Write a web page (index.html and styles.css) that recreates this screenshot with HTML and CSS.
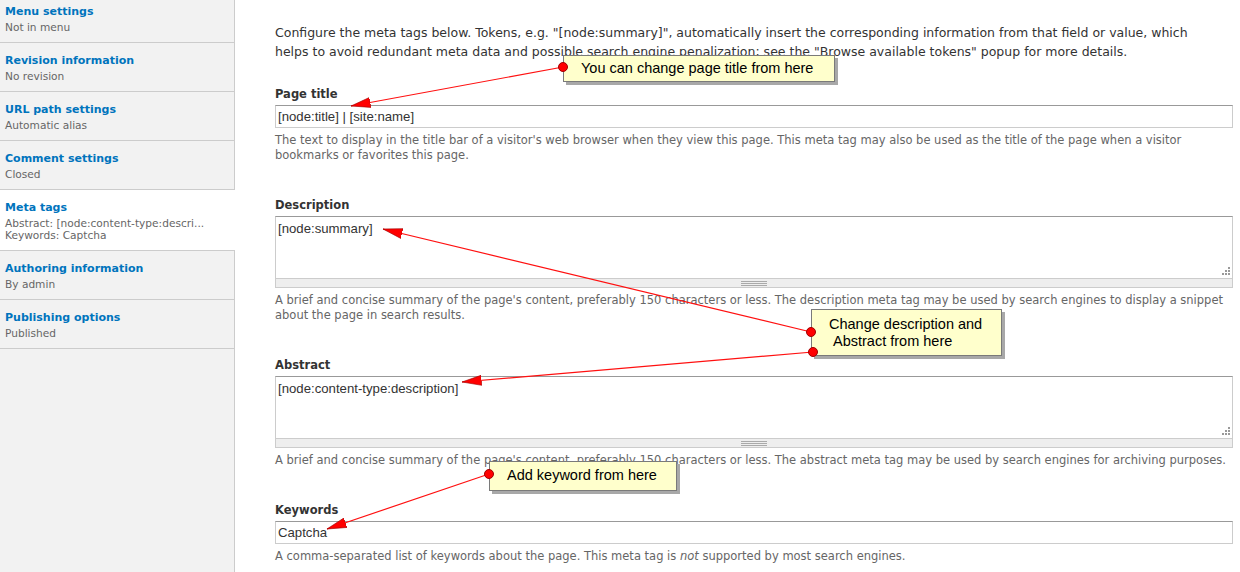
FILE: index.html
```html
<!DOCTYPE html>
<html lang="en">
<head>
<meta charset="utf-8">
<title>Meta tags</title>
<link rel="stylesheet" href="styles.css">
</head>
<body>
<aside class="tabs">
  <ul class="tab-list">
    <li class="tab"><a class="tab-title" href="#">Menu settings</a><span class="tab-summary">Not in menu</span></li>
    <li class="tab"><a class="tab-title" href="#">Revision information</a><span class="tab-summary">No revision</span></li>
    <li class="tab"><a class="tab-title" href="#">URL path settings</a><span class="tab-summary">Automatic alias</span></li>
    <li class="tab"><a class="tab-title" href="#">Comment settings</a><span class="tab-summary">Closed</span></li>
    <li class="tab tab-selected"><a class="tab-title" href="#">Meta tags</a><span class="tab-summary">Abstract: [node:content-type:descri...</span><span class="tab-summary">Keywords: Captcha</span></li>
    <li class="tab"><a class="tab-title" href="#">Authoring information</a><span class="tab-summary">By admin</span></li>
    <li class="tab"><a class="tab-title" href="#">Publishing options</a><span class="tab-summary">Published</span></li>
  </ul>
</aside>

<main class="pane">
  <p class="intro">Configure the meta tags below. Tokens, e.g. "[node:summary]", automatically insert the corresponding information from that field or value, which helps to avoid redundant meta data and possible search engine penalization; see the "Browse available tokens" popup for more details.</p>

  <div class="field field-first">
    <label class="field-label" for="f-title">Page title</label>
    <input class="text-input" id="f-title" type="text" value="[node:title] | [site:name]" readonly>
    <div class="field-desc">The text to display in the title bar of a visitor's web browser when they view this page. This meta tag may also be used as the title of the page when a visitor bookmarks or favorites this page.</div>
  </div>

  <div class="field">
    <label class="field-label" for="f-desc">Description</label>
    <div class="textarea-wrap">
      <textarea class="text-area" id="f-desc" readonly>[node:summary]</textarea>
      <span class="resize-dots"></span>
      <div class="grippie"><span class="grip-lines"></span></div>
    </div>
    <div class="field-desc">A brief and concise summary of the page's content, preferably 150 characters or less. The description meta tag may be used by search engines to display a snippet about the page in search results.</div>
  </div>

  <div class="field">
    <label class="field-label" for="f-abs">Abstract</label>
    <div class="textarea-wrap">
      <textarea class="text-area" id="f-abs" readonly>[node:content-type:description]</textarea>
      <span class="resize-dots"></span>
      <div class="grippie"><span class="grip-lines"></span></div>
    </div>
    <div class="field-desc">A brief and concise summary of the page's content, preferably 150 characters or less. The abstract meta tag may be used by search engines for archiving purposes.</div>
  </div>

  <div class="field">
    <label class="field-label" for="f-kw">Keywords</label>
    <input class="text-input" id="f-kw" type="text" value="Captcha" readonly>
    <div class="field-desc">A comma-separated list of keywords about the page. This meta tag is <em>not</em> supported by most search engines.</div>
  </div>
</main>

<div class="callout callout-title">You can change page title from here</div>
<div class="callout callout-desc">Change description and<br>&nbsp;Abstract from here</div>
<div class="callout callout-kw">Add keyword from here</div>

<svg class="arrows" width="1240" height="572" viewBox="0 0 1240 572" aria-hidden="true">
  <defs>
    <marker id="head" markerUnits="userSpaceOnUse" viewBox="0 0 20 11" markerWidth="20" markerHeight="11" refX="19.5" refY="5.5" orient="auto">
      <path d="M0,0.5 L19.5,5.5 L0,10.5 Z" fill="#ff0000" stroke="#a00000" stroke-width="0.6"/>
    </marker>
  </defs>
  <g stroke="#ff1010" stroke-width="1.2" fill="none">
    <line x1="563" y1="67" x2="351" y2="106" marker-end="url(#head)"/>
    <line x1="811" y1="332" x2="383" y2="229" marker-end="url(#head)"/>
    <line x1="813" y1="352" x2="462" y2="382" marker-end="url(#head)"/>
    <line x1="489" y1="474" x2="327" y2="529" marker-end="url(#head)"/>
  </g>
  <g fill="#ff0000" stroke="#a00000" stroke-width="1">
    <circle cx="563" cy="67" r="4.5"/>
    <circle cx="811" cy="332" r="4.5"/>
    <circle cx="813" cy="352" r="4.5"/>
    <circle cx="489" cy="474" r="4.5"/>
  </g>
</svg>
</body>
</html>
```

FILE: styles.css
```css
* { box-sizing: border-box; }

html, body {
  margin: 0;
  padding: 0;
}

body {
  position: relative;
  width: 1240px;
  height: 572px;
  overflow: hidden;
  display: flex;
  background: #fff;
  font-family: "DejaVu Sans", Verdana, sans-serif;
  color: #333;
}

/* ---------- vertical tabs ---------- */
.tabs {
  width: 235px;
  flex: none;
  background: #f2f2f2;
  border-right: 1px solid #cccccc;
}

.tab-list {
  list-style: none;
  margin: -6px 0 0;
  padding: 0;
}

.tab {
  display: flex;
  flex-direction: column;
  padding: 9px 5px 9px 5px;
  border-bottom: 1px solid #cccccc;
}

.tab-selected {
  background: #fff;
  margin-right: -1px;
}

.tab-title {
  color: #0074bd;
  font-weight: bold;
  font-size: 11px;
  line-height: 18px;
  text-decoration: none;
}

.tab-summary {
  color: #666;
  font-size: 10.6px;
  line-height: 12px;
  white-space: nowrap;
}

/* ---------- main pane ---------- */
.pane {
  flex: 1;
  padding: 23px 7px 0 40px;
}

.intro {
  margin: 0;
  font-size: 12.5px;
  line-height: 19px;
  color: #333;
  max-width: 930px;
}

.field { margin-top: 34px; }
.field-first { margin-top: 25px; }

.field-label {
  display: block;
  font-weight: bold;
  font-size: 11.5px;
  line-height: 16px;
  margin-bottom: 3px;
  color: #333;
}

.text-input {
  display: block;
  width: 100%;
  height: 23px;
  margin: 0;
  padding: 0 2px;
  border: 1px solid #ccc;
  border-top-color: #999;
  font-family: "Liberation Sans", Arial, sans-serif;
  font-size: 13.2px;
  color: #333;
  background: #fff;
  outline: none;
}

.textarea-wrap {
  position: relative;
}

.text-area {
  display: block;
  width: 100%;
  height: 62px;
  margin: 0;
  padding: 3px 2px;
  border: 1px solid #ccc;
  border-top-color: #999;
  border-bottom: none;
  font-family: "Liberation Sans", Arial, sans-serif;
  font-size: 13.2px;
  line-height: 18px;
  color: #333;
  resize: none;
  outline: none;
  background: #fff;
}

.resize-dots {
  position: absolute;
  right: 3px;
  top: 51px;
  width: 8px;
  height: 8px;
  background:
    linear-gradient(#999, #999) 6px 0 / 2px 2px no-repeat,
    linear-gradient(#999, #999) 3px 3px / 2px 2px no-repeat,
    linear-gradient(#999, #999) 6px 3px / 2px 2px no-repeat,
    linear-gradient(#999, #999) 0 6px / 2px 2px no-repeat,
    linear-gradient(#999, #999) 3px 6px / 2px 2px no-repeat,
    linear-gradient(#999, #999) 6px 6px / 2px 2px no-repeat;
}

.grippie {
  height: 10px;
  border: 1px solid #ccc;
  background: #eee;
  display: flex;
  justify-content: center;
  align-items: center;
}

.grip-lines {
  width: 26px;
  height: 5px;
  background: repeating-linear-gradient(#aaa 0 1px, transparent 1px 2px);
}

.field-desc {
  margin-top: 5px;
  margin-right: -4px;
  font-size: 11.5px;
  line-height: 15px;
  color: #666;
}

/* ---------- annotations ---------- */
.callout {
  position: absolute;
  background: #ffffcc;
  border: 1px solid #7a7a7a;
  box-shadow: 3px 3px 0 #a8a8a8;
  font-family: "Liberation Sans", Arial, sans-serif;
  font-size: 14.5px;
  color: #000;
  white-space: nowrap;
}

.callout-title {
  left: 563px;
  top: 55px;
  width: 272px;
  height: 27px;
  padding: 4px 0 0 17px;
  line-height: 17px;
}

.callout-desc {
  left: 811px;
  top: 309px;
  width: 191px;
  height: 47px;
  padding: 6px 0 0 17px;
  line-height: 17px;
}

.callout-kw {
  left: 489px;
  top: 461px;
  width: 188px;
  height: 30px;
  padding: 5px 0 0 17px;
  line-height: 17px;
}

.arrows {
  position: absolute;
  left: 0;
  top: 0;
  pointer-events: none;
}
```
